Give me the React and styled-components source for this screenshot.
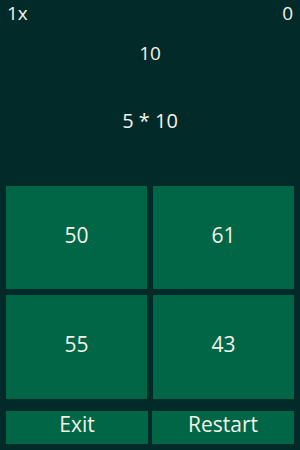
import React from "react";
import styled, { createGlobalStyle } from "styled-components";

const GlobalStyle = createGlobalStyle`
  html, body {
    margin: 0;
    padding: 0;
    background-color: #022a28;
  }
  * {
    box-sizing: border-box;
  }
`;

const GameWrapper = styled.div`
  width: 300px;
  height: 450px;
  display: flex;
  flex-direction: column;
  background-color: #022a28;
  color: #f2f2ea;
  font-family: "Open Sans", "DejaVu Sans", sans-serif;
`;

const TopBar = styled.div`
  display: flex;
  justify-content: space-between;
  align-items: flex-start;
  height: 24px;
  padding: 0 7px;
  font-size: 19px;
  line-height: normal;
`;

const Display = styled.div`
  flex: 1;
  display: flex;
  flex-direction: column;
  align-items: center;
  padding-top: 16px;
  gap: 42px;
`;

const DisplayLine = styled.div`
  height: 26px;
  line-height: 26px;
  font-size: ${(props) => props.size || 19}px;
`;

const AnswerGrid = styled.div`
  display: grid;
  grid-template-columns: 1fr 1fr;
  grid-template-rows: 103px 104px;
  gap: 6px;
  padding: 0 6px;
`;

const AnswerTile = styled.button`
  border: none;
  background-color: #006645;
  color: #f2f2ea;
  font-family: inherit;
  font-size: 21px;
  display: flex;
  align-items: center;
  justify-content: center;
  padding: 0 0 6px;
`;

const ActionRow = styled.div`
  display: grid;
  grid-template-columns: 142px 142px;
  justify-content: space-between;
  height: 33px;
  margin: 12px 6px 6px;
`;

const ActionButton = styled.button`
  border: none;
  background-color: #006645;
  color: #f2f2ea;
  font-family: inherit;
  font-size: 21px;
  line-height: 1;
  padding: 0 0 6px;
`;

const answers = [50, 61, 55, 43];

export default function App() {
  return (
    <>
      <GlobalStyle />
      <GameWrapper>
        <TopBar>
          <span>1x</span>
          <span>0</span>
        </TopBar>
        <Display>
          <DisplayLine size={19}>10</DisplayLine>
          <DisplayLine size={20}>5 * 10</DisplayLine>
        </Display>
        <AnswerGrid>
          {answers.map((a) => (
            <AnswerTile key={a}>{a}</AnswerTile>
          ))}
        </AnswerGrid>
        <ActionRow>
          <ActionButton>Exit</ActionButton>
          <ActionButton>Restart</ActionButton>
        </ActionRow>
      </GameWrapper>
    </>
  );
}
